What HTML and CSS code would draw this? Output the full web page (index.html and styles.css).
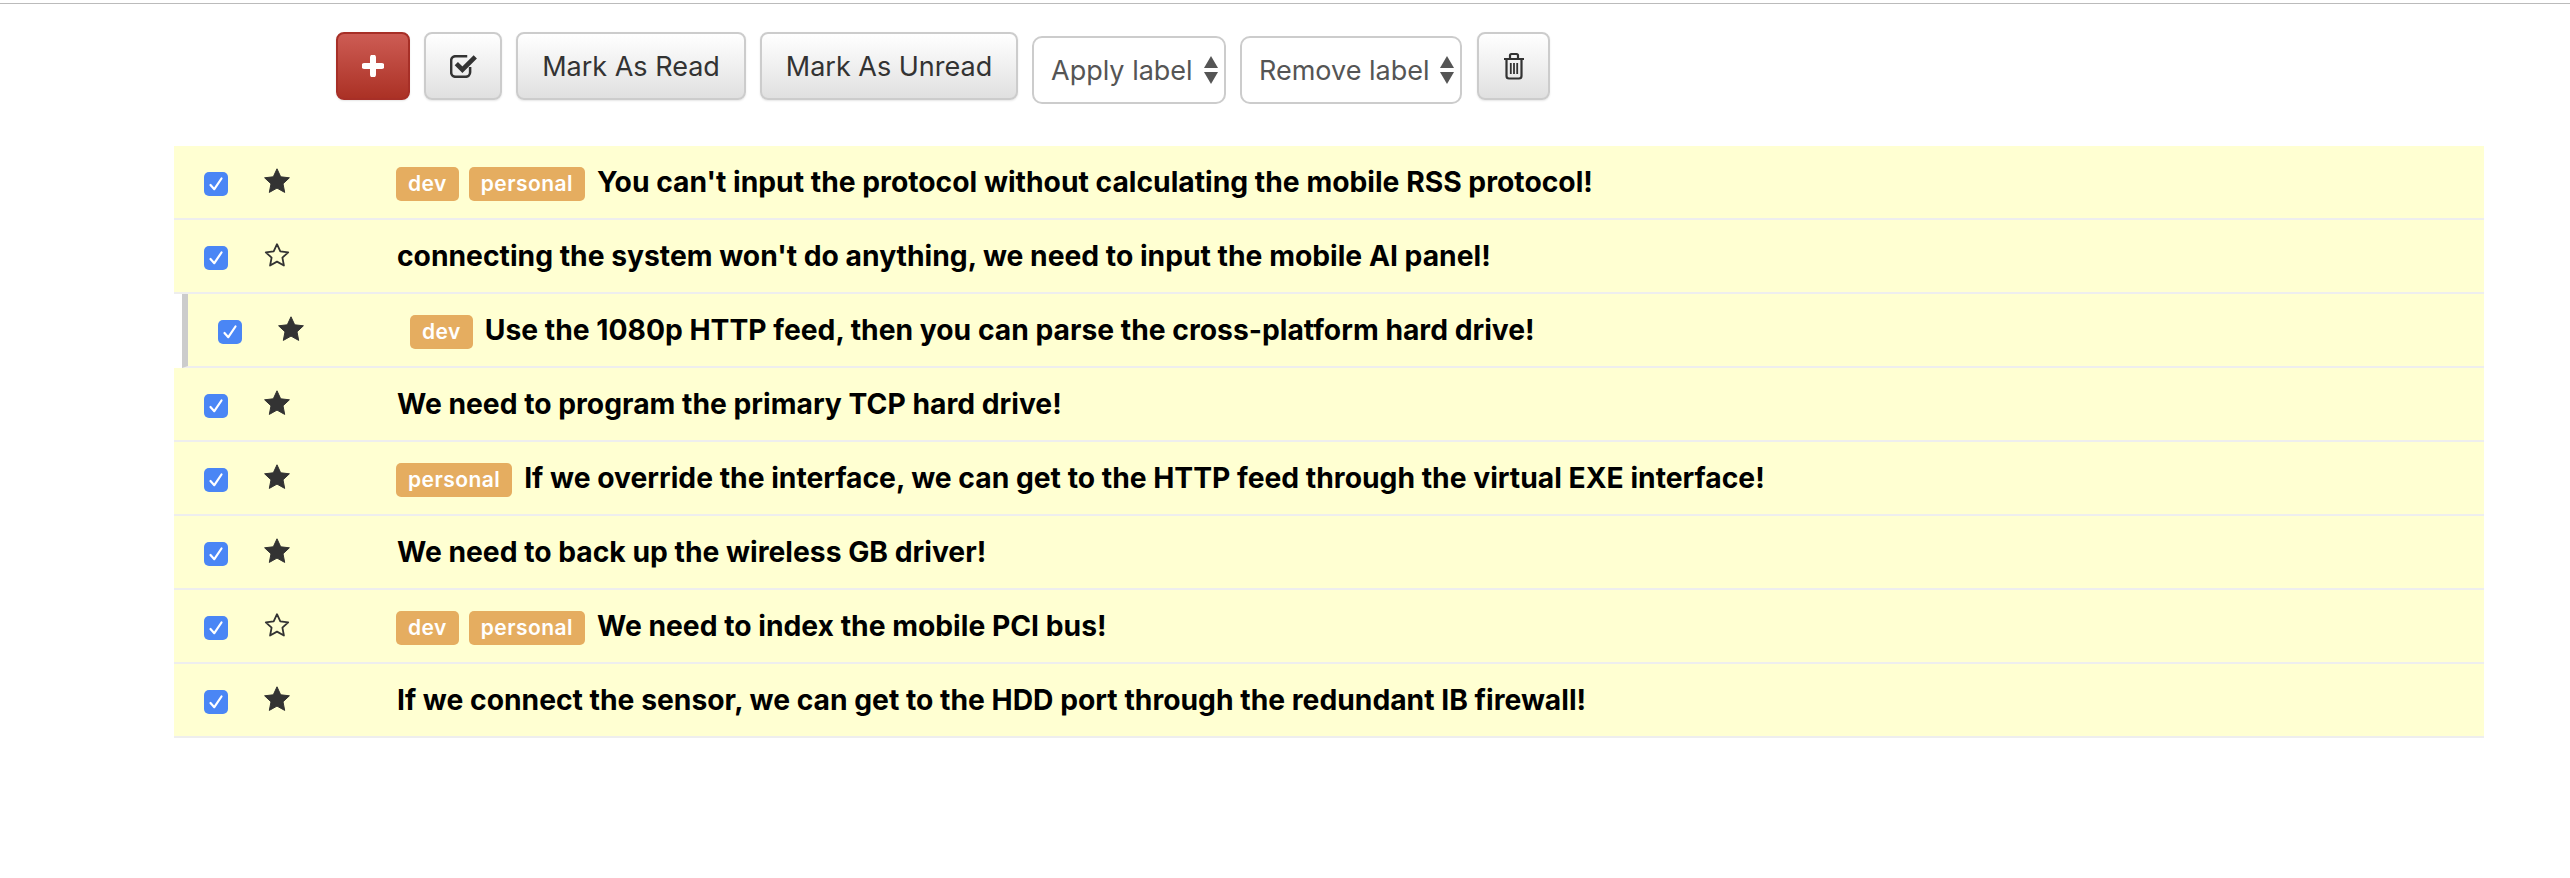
FILE: index.html
```html
<!DOCTYPE html>
<html lang="en">
<head>
<meta charset="utf-8">
<title>Messages</title>
<link rel="stylesheet" href="styles.css">
</head>
<body>
<svg class="defs" width="0" height="0" aria-hidden="true">
  <symbol id="tick" viewBox="0 0 24 24"><path d="M6.500 13l3.800 4.200L17.500 6.500" fill="none" stroke="#fff" stroke-width="2.200" stroke-linecap="round" stroke-linejoin="round"/></symbol>
  <symbol id="star-full" viewBox="0 0 26 26"><path d="M13 .8l3.700 8 8.700 1-6.400 6 1.700 8.600-7.700-4.300-7.700 4.300 1.700-8.600-6.400-6 8.700-1z" fill="#333" stroke="#333" stroke-linejoin="round"/></symbol>
  <symbol id="star-empty" viewBox="0 0 26 26"><path d="M13 2.200l3.300 7.200 7.900.9-5.800 5.400 1.500 7.800-6.900-3.900-6.900 3.900 1.500-7.800-5.800-5.400 7.900-.9z" fill="none" stroke="#333" stroke-width="1.800" stroke-linejoin="round"/></symbol>
</svg>
<div class="page">
  <div class="toolbar">
    <button class="btn btn-danger"><svg class="plus" viewBox="0 0 22 22"><path d="M11 2.500v17M2.500 11h17" fill="none" stroke="#fff" stroke-width="6" stroke-linecap="round"/></svg></button>
    <button class="btn btn-check"><svg class="ico" viewBox="1 3 23.500 20"><path d="M18.500 13.500V18a4 4 0 0 1-4 4H6a4 4 0 0 1-4-4V8a4 4 0 0 1 4-4h10" fill="none" stroke="#333" stroke-width="2.200"/><path d="M6.500 10.500l5.300 5.300L23 4.600" fill="none" stroke="#333" stroke-width="4"/></svg></button>
    <button class="btn">Mark As Read</button>
    <button class="btn">Mark As Unread</button>
    <div class="select apply">Apply label<span class="arrows"></span></div>
    <div class="select remove">Remove label<span class="arrows"></span></div>
    <button class="btn btn-trash"><svg class="trash" viewBox="0 0 22 28"><path d="M1 7h20M7 7V3.500A1.500 1.500 0 0 1 8.500 2h5A1.500 1.500 0 0 1 15 3.500V7M3.500 7v17a2.500 2.500 0 0 0 2.500 2.500h10a2.500 2.500 0 0 0 2.500-2.500V7" fill="none" stroke="#333" stroke-width="2.200"/><path d="M7.800 11v11M11 11v11M14.200 11v11" fill="none" stroke="#333" stroke-width="1.800"/></svg></button>
  </div>
  <div class="list">
    <div class="row"><span class="check"><svg><use href="#tick"/></svg></span><svg class="star"><use href="#star-full"/></svg><span class="subject"><span class="label">dev</span><span class="label">personal</span>You can't input the protocol without calculating the mobile RSS protocol!</span></div>
    <div class="row"><span class="check"><svg><use href="#tick"/></svg></span><svg class="star"><use href="#star-empty"/></svg><span class="subject">connecting the system won't do anything, we need to input the mobile AI panel!</span></div>
    <div class="row selected"><span class="check"><svg><use href="#tick"/></svg></span><svg class="star"><use href="#star-full"/></svg><span class="subject"><span class="label">dev</span>Use the 1080p HTTP feed, then you can parse the cross-platform hard drive!</span></div>
    <div class="row"><span class="check"><svg><use href="#tick"/></svg></span><svg class="star"><use href="#star-full"/></svg><span class="subject">We need to program the primary TCP hard drive!</span></div>
    <div class="row"><span class="check"><svg><use href="#tick"/></svg></span><svg class="star"><use href="#star-full"/></svg><span class="subject"><span class="label">personal</span>If we override the interface, we can get to the HTTP feed through the virtual EXE interface!</span></div>
    <div class="row"><span class="check"><svg><use href="#tick"/></svg></span><svg class="star"><use href="#star-full"/></svg><span class="subject">We need to back up the wireless GB driver!</span></div>
    <div class="row"><span class="check"><svg><use href="#tick"/></svg></span><svg class="star"><use href="#star-empty"/></svg><span class="subject"><span class="label">dev</span><span class="label">personal</span>We need to index the mobile PCI bus!</span></div>
    <div class="row"><span class="check"><svg><use href="#tick"/></svg></span><svg class="star"><use href="#star-full"/></svg><span class="subject">If we connect the sensor, we can get to the HDD port through the redundant IB firewall!</span></div>
  </div>
</div>
</body>
</html>
```
FILE: styles.css
```css
* { box-sizing: border-box; }
html, body { margin: 0; background: #fff; }
body { font-family: Inter, "Liberation Sans", sans-serif; color: #333; }
.defs { display: block; height: 0; }
.page { margin-top: 3px; border-top: 1px solid #bbb; height: 875px; padding: 0 86px 0 174px; }
.toolbar { display: flex; align-items: flex-start; gap: 14px; padding: 28px 0 0 162px; height: 142px; }
.btn { height: 68px; width: 230px; padding: 0; font: 27px Inter, "Liberation Sans", sans-serif; color: #333; border: 2px solid #ccc; border-radius: 8px; background: linear-gradient(#fff, #e0e0e0); box-shadow: 0 1px 2px rgba(0,0,0,.1); display: flex; align-items: center; justify-content: center; flex: none; }
.btn + .btn + .btn + .btn { width: 258px; }
.toolbar .btn-danger { width: 74px; background: linear-gradient(#cd5c54, #ab3125); border-color: #a72f27; }
.toolbar .btn-check { width: 78px; }
.toolbar .btn-trash { width: 73px; margin-left: 1px; }
.plus { width: 22px; height: 22px; display: block; }
.ico { width: 27px; height: 23px; display: block; }
.trash { width: 22px; height: 28px; display: block; }
.select { height: 68px; margin-top: 4px; border: 2px solid #ccc; border-radius: 10px; font-size: 27px; color: #555; display: flex; align-items: center; padding: 0 6px 0 17px; justify-content: space-between; background: #fff; flex: none; }
.apply { width: 194px; }
.remove { width: 222px; }
.arrows { width: 14px; height: 28px; position: relative; flex: none; }
.arrows::before, .arrows::after { content: ""; position: absolute; left: 0; border-left: 7px solid transparent; border-right: 7px solid transparent; }
.arrows::before { top: 0; border-bottom: 12px solid #555; }
.arrows::after { bottom: 0; border-top: 12px solid #555; }
.row { display: flex; align-items: center; height: 74px; background: #ffffd2; border-bottom: 2px solid #eee; padding: 2px 0 0 30px; font-size: 28.25px; font-weight: 700; color: #000; }
.selected { border-left: 6px solid #ccc; margin-left: 8px; }
.check { width: 24px; height: 24px; margin-top: 2px; background: #4a86f5; border-radius: 5px; flex: none; }
.check svg { display: block; width: 24px; height: 24px; }
.star { width: 26px; height: 26px; margin: -4px 0 0 36px; flex: none; }
.subject { margin: -2px 0 0 107px; display: flex; align-items: center; white-space: nowrap; }
.label { background: #e5ad60; color: #fff; font-size: 21px; font-weight: 600; letter-spacing: .45px; border-radius: 5px; padding: 0 12px; margin: 3px 10px 0 -1px; height: 34px; line-height: 34px; }
.label + .label { margin-left: 0; }
.label:last-child { margin-right: 12px; }
```
